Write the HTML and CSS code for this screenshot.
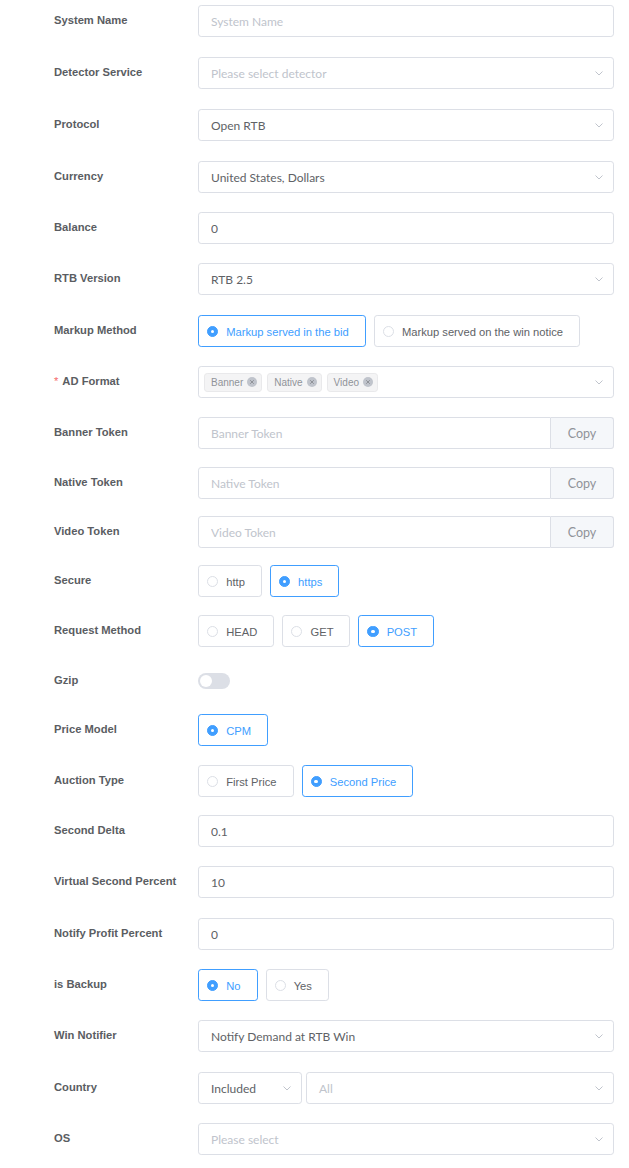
FILE: index.html
```html
<!DOCTYPE html>
<html>
<head>
<meta charset="utf-8">
<link rel="stylesheet" href="styles.css">
</head>
<body>
<form class="form">
  <div class="item m20"><span class="lbl">System Name</span><div class="ctl"><input class="inp" placeholder="System Name"></div></div>

  <div class="item m20"><span class="lbl">Detector Service</span><div class="ctl"><div class="sel"><span class="ph">Please select detector</span><svg class="arr" width="8" height="5" viewBox="0 0 8 5"><polyline points="0.5,0.5 4,4 7.5,0.5"/></svg></div></div></div>

  <div class="item m20"><span class="lbl">Protocol</span><div class="ctl"><div class="sel"><span class="val">Open RTB</span><svg class="arr" width="8" height="5" viewBox="0 0 8 5"><polyline points="0.5,0.5 4,4 7.5,0.5"/></svg></div></div></div>

  <div class="item m19"><span class="lbl">Currency</span><div class="ctl"><div class="sel"><span class="val">United States, Dollars</span><svg class="arr" width="8" height="5" viewBox="0 0 8 5"><polyline points="0.5,0.5 4,4 7.5,0.5"/></svg></div></div></div>

  <div class="item m19"><span class="lbl">Balance</span><div class="ctl"><input class="inp" value="0"></div></div>

  <div class="item m20"><span class="lbl">RTB Version</span><div class="ctl"><div class="sel"><span class="val">RTB 2.5</span><svg class="arr" width="8" height="5" viewBox="0 0 8 5"><polyline points="0.5,0.5 4,4 7.5,0.5"/></svg></div></div></div>

  <div class="item m19"><span class="lbl">Markup Method</span><div class="ctl radios">
    <label class="rb on"><span class="dot"></span><span class="txt">Markup served in the bid</span></label>
    <label class="rb"><span class="dot"></span><span class="txt">Markup served on the win notice</span></label>
  </div></div>

  <div class="item m19"><span class="lbl"><span class="req">*</span>AD Format</span><div class="ctl"><div class="sel tags">
    <span class="tag">Banner<svg class="x" width="10" height="10" viewBox="0 0 10 10"><circle cx="5" cy="5" r="5"/><path d="M3.2 3.2L6.8 6.8M6.8 3.2L3.2 6.8"/></svg></span>
    <span class="tag">Native<svg class="x" width="10" height="10" viewBox="0 0 10 10"><circle cx="5" cy="5" r="5"/><path d="M3.2 3.2L6.8 6.8M6.8 3.2L3.2 6.8"/></svg></span>
    <span class="tag">Video<svg class="x" width="10" height="10" viewBox="0 0 10 10"><circle cx="5" cy="5" r="5"/><path d="M3.2 3.2L6.8 6.8M6.8 3.2L3.2 6.8"/></svg></span>
    <svg class="arr" width="8" height="5" viewBox="0 0 8 5"><polyline points="0.5,0.5 4,4 7.5,0.5"/></svg>
  </div></div></div>

  <div class="item m18"><span class="lbl">Banner Token</span><div class="ctl"><div class="group"><input class="inp" placeholder="Banner Token"><span class="append">Copy</span></div></div></div>

  <div class="item m17"><span class="lbl">Native Token</span><div class="ctl"><div class="group"><input class="inp" placeholder="Native Token"><span class="append">Copy</span></div></div></div>

  <div class="item m17"><span class="lbl">Video Token</span><div class="ctl"><div class="group"><input class="inp" placeholder="Video Token"><span class="append">Copy</span></div></div></div>

  <div class="item m18"><span class="lbl">Secure</span><div class="ctl radios">
    <label class="rb"><span class="dot"></span><span class="txt">http</span></label>
    <label class="rb on"><span class="dot"></span><span class="txt">https</span></label>
  </div></div>

  <div class="item m18"><span class="lbl">Request Method</span><div class="ctl radios">
    <label class="rb"><span class="dot"></span><span class="txt">HEAD</span></label>
    <label class="rb"><span class="dot"></span><span class="txt">GET</span></label>
    <label class="rb on"><span class="dot"></span><span class="txt">POST</span></label>
  </div></div>

  <div class="item m17"><span class="lbl">Gzip</span><div class="ctl"><span class="switch"></span></div></div>

  <div class="item m19"><span class="lbl">Price Model</span><div class="ctl radios">
    <label class="rb on"><span class="dot"></span><span class="txt">CPM</span></label>
  </div></div>

  <div class="item m18"><span class="lbl">Auction Type</span><div class="ctl radios">
    <label class="rb"><span class="dot"></span><span class="txt">First Price</span></label>
    <label class="rb on"><span class="dot"></span><span class="txt">Second Price</span></label>
  </div></div>

  <div class="item m19"><span class="lbl">Second Delta</span><div class="ctl"><input class="inp" value="0.1"></div></div>

  <div class="item m20"><span class="lbl">Virtual Second Percent</span><div class="ctl"><input class="inp" value="10"></div></div>

  <div class="item m19"><span class="lbl">Notify Profit Percent</span><div class="ctl"><input class="inp" value="0"></div></div>

  <div class="item m19"><span class="lbl">is Backup</span><div class="ctl radios">
    <label class="rb on"><span class="dot"></span><span class="txt">No</span></label>
    <label class="rb"><span class="dot"></span><span class="txt">Yes</span></label>
  </div></div>

  <div class="item m20"><span class="lbl">Win Notifier</span><div class="ctl"><div class="sel"><span class="val">Notify Demand at RTB Win</span><svg class="arr" width="8" height="5" viewBox="0 0 8 5"><polyline points="0.5,0.5 4,4 7.5,0.5"/></svg></div></div></div>

  <div class="item m19"><span class="lbl">Country</span><div class="ctl pair">
    <div class="sel small"><span class="val">Included</span><svg class="arr" width="8" height="5" viewBox="0 0 8 5"><polyline points="0.5,0.5 4,4 7.5,0.5"/></svg></div>
    <div class="sel grow"><span class="ph">All</span><svg class="arr" width="8" height="5" viewBox="0 0 8 5"><polyline points="0.5,0.5 4,4 7.5,0.5"/></svg></div>
  </div></div>

  <div class="item m19"><span class="lbl">OS</span><div class="ctl"><div class="sel"><span class="ph">Please select</span><svg class="arr" width="8" height="5" viewBox="0 0 8 5"><polyline points="0.5,0.5 4,4 7.5,0.5"/></svg></div></div></div>
</form>
</body>
</html>
```

FILE: styles.css
```css
html, body {
  margin: 0;
  padding: 0;
  background: #ffffff;
}

.form {
  margin: 0;
  padding: 5px 0 0 54px;
  font-family: "Liberation Sans", Arial, sans-serif;
}

.item {
  display: flex;
  align-items: center;
  height: 32px;
  margin-bottom: 19px;
}

.item.m17 { margin-bottom: 17px; }
.item.m18 { margin-bottom: 18px; }
.item.m19 { margin-bottom: 19px; }
.item.m20 { margin-bottom: 20px; }

.lbl {
  width: 144px;
  flex: none;
  font-family: "Liberation Sans", Arial, sans-serif;
  font-weight: bold;
  font-size: 11.2px;
  color: #5a5d62;
  line-height: 30px;
  align-self: flex-start;
}

.req {
  color: #f56c6c;
  margin-right: 4px;
  font-weight: normal;
}

.ctl {
  width: 416px;
  height: 32px;
  display: flex;
  align-items: center;
}

.inp {
  box-sizing: border-box;
  width: 100%;
  height: 32px;
  margin: 0;
  padding: 1px 12px 0;
  border: 1px solid #dcdfe6;
  border-radius: 3.2px;
  background: #fff;
  font-family: Lato, "Liberation Sans", sans-serif;
  font-size: 12px;
  color: #606266;
  outline: none;
}

.inp::placeholder {
  color: #c0c4cc;
}

.sel {
  box-sizing: border-box;
  width: 100%;
  height: 32px;
  display: flex;
  align-items: center;
  padding: 1px 10px 0 12px;
  border: 1px solid #dcdfe6;
  border-radius: 3.2px;
  background: #fff;
  font-family: Lato, "Liberation Sans", sans-serif;
  font-size: 12px;
}

.sel .val {
  color: #606266;
  flex: 1;
}

.sel .ph {
  color: #c0c4cc;
  flex: 1;
}

.arr {
  flex: none;
  fill: none;
  stroke: #c0c4cc;
  stroke-width: 1;
}

.sel.tags {
  padding: 0 10px 0 5px;
  gap: 5px;
}

.sel.tags .arr {
  margin-left: auto;
}

.tag {
  box-sizing: border-box;
  height: 19px;
  display: inline-flex;
  align-items: center;
  padding: 0 4px 0 6px;
  gap: 4px;
  background: #f4f4f5;
  border: 1px solid #e9e9eb;
  border-radius: 3.2px;
  font-family: "Liberation Sans", Arial, sans-serif;
  font-size: 10px;
  color: #909399;
}

.tag .x circle {
  fill: #c0c4cc;
}

.tag .x path {
  stroke: #909399;
  stroke-width: 1;
  fill: none;
}

.group {
  display: flex;
  width: 100%;
  height: 32px;
}

.group .inp {
  flex: 1;
  border-radius: 3.2px 0 0 3.2px;
}

.append {
  box-sizing: border-box;
  width: 63px;
  height: 32px;
  display: flex;
  align-items: center;
  justify-content: center;
  padding-top: 1px;
  background: #f5f7fa;
  border: 1px solid #dcdfe6;
  border-left: none;
  border-radius: 0 3.2px 3.2px 0;
  font-family: Lato, "Liberation Sans", sans-serif;
  font-size: 12.5px;
  color: #909399;
}

.radios {
  gap: 8px;
}

.rb {
  box-sizing: border-box;
  height: 32px;
  display: inline-flex;
  align-items: center;
  padding: 1px 16px 0 8px;
  border: 1px solid #dcdfe6;
  border-radius: 3.2px;
  font-size: 11.2px;
  color: #606266;
  white-space: nowrap;
}

.rb .dot {
  box-sizing: border-box;
  width: 11.2px;
  height: 11.2px;
  border: 1px solid #dcdfe6;
  border-radius: 50%;
  background: #fff;
  margin-right: 8px;
  display: inline-flex;
  align-items: center;
  justify-content: center;
}

.rb.on {
  border-color: #409eff;
  color: #409eff;
}

.rb.on .dot {
  border-color: #409eff;
  background: #409eff;
}

.rb.on .dot::after {
  content: "";
  width: 3.6px;
  height: 3.6px;
  border-radius: 50%;
  background: #fff;
}

.switch {
  position: relative;
  width: 32px;
  height: 16px;
  border-radius: 8px;
  background: #dcdfe6;
}

.switch::after {
  content: "";
  position: absolute;
  left: 1.6px;
  top: 1.6px;
  width: 12.8px;
  height: 12.8px;
  border-radius: 50%;
  background: #fff;
}

.pair {
  gap: 4px;
}

.sel.small {
  width: 104px;
  flex: none;
}

.sel.grow {
  flex: 1;
  width: auto;
}
```
